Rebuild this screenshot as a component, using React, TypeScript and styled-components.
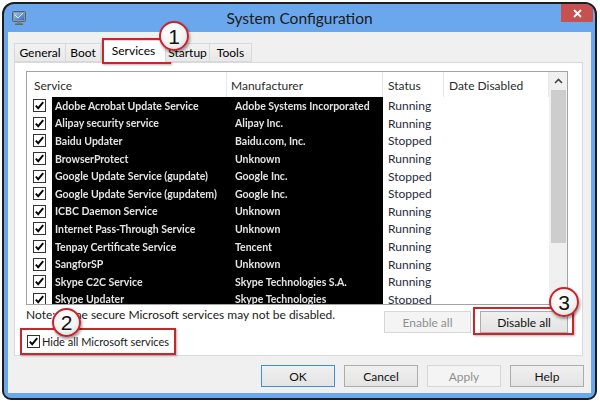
import React from "react";
import styled, { createGlobalStyle } from "styled-components";

const GlobalStyle = createGlobalStyle`
  html, body {
    margin: 0;
    padding: 0;
    background: #ffffff;
  }
  body {
    font-family: Lato, "Liberation Sans", sans-serif;
    font-size: 12px;
    color: #000;
  }
`;

const Page = styled.div`
  width: 600px;
  height: 406px;
  padding: 2px 0 0 2px;
  box-sizing: border-box;
`;

const Window = styled.div`
  width: 595px;
  height: 398px;
  box-sizing: border-box;
  border: 2px solid #1d1d1d;
  border-radius: 12px 12px 9px 9px;
  background: #6ba7ec;
  display: flex;
  flex-direction: column;
  overflow: hidden;
`;

const TitleBar = styled.div`
  height: 28px;
  flex: none;
  display: grid;
  grid-template-columns: 1fr auto 1fr;
  align-items: center;
`;

const AppIcon = styled.div`
  padding-left: 8px;
  display: flex;
  align-items: center;
`;

const Title = styled.div`
  font-size: 15.5px;
  color: #1a1a1a;
  margin-top: -1px;
`;

const CloseButton = styled.div`
  justify-self: end;
  align-self: start;
  width: 32px;
  height: 18px;
  margin-right: 2px;
  background: #c75050;
  display: flex;
  align-items: center;
  justify-content: center;
`;

const Client = styled.div`
  flex: 1;
  margin: 0 4px 5px;
  background: #f0f0f0;
  padding: 8px 8px 6px 6px;
  display: flex;
  flex-direction: column;
`;

const TabStrip = styled.div`
  display: flex;
  align-items: flex-end;
  height: 23px;
  margin-bottom: -1px;
`;

const Tab = styled.div<{ $w: number; $active?: boolean }>`
  position: relative;
  box-sizing: border-box;
  width: ${(p) => p.$w}px;
  height: ${(p) => (p.$active ? 23 : 19)}px;
  margin-bottom: ${(p) => (p.$active ? 0 : 1)}px;
  border: 1px solid #d9d9d9;
  border-bottom: ${(p) => (p.$active ? "none" : "1px solid #d9d9d9")};
  border-left-width: ${(p) => (p.$active ? 1 : 0)}px;
  background: ${(p) => (p.$active ? "#ffffff" : "linear-gradient(#f2f2f2, #e8e8e8)")};
  display: flex;
  align-items: center;
  justify-content: center;
  padding-bottom: ${(p) => (p.$active ? 3 : 0)}px;
  &:first-child {
    border-left-width: 1px;
  }
`;

const TabHighlight = styled.div`
  position: absolute;
  top: -3px;
  left: 0;
  right: -6px;
  bottom: -1px;
  border: 2px solid #c9252c;
  box-shadow: 1px 1px 2px rgba(0, 0, 0, 0.3);
`;

const Panel = styled.div`
  box-sizing: border-box;
  height: 294px;
  border: 1px solid #d9d9d9;
  background: #ffffff;
  padding: 8px 14px 0 11px;
`;

const ListView = styled.div`
  box-sizing: border-box;
  height: 234px;
  border: 1px solid #a3a3a3;
  background: #ffffff;
  display: flex;
  overflow: hidden;
`;

const Table = styled.div`
  flex: 1;
  display: flex;
  flex-direction: column;
  overflow: hidden;
`;

const HeaderRow = styled.div`
  display: grid;
  grid-template-columns: 200px 156px 61px 1fr;
  height: 25px;
  flex: none;
`;

const HeaderCell = styled.div<{ $pad: number }>`
  border-right: 1px solid #e3e8ee;
  padding-left: ${(p) => p.$pad}px;
  display: flex;
  align-items: center;
  color: #2b2b2b;
  padding-top: 1px;
`;

const Row = styled.div`
  display: grid;
  grid-template-columns: 25px 175px 156px 61px 1fr;
  height: 17.6px;
  flex: none;
  align-items: center;
`;

const CheckCell = styled.div`
  padding-left: 6px;
  display: flex;
  align-items: center;
`;

const Redacted = styled.div<{ $pad: number }>`
  background: #000;
  height: 100%;
  display: flex;
  align-items: center;
  padding-left: ${(p) => p.$pad}px;
  color: #e4e4e4;
  font-weight: 700;
  font-size: 10.5px;
  white-space: nowrap;
  overflow: hidden;
  filter: blur(0.35px);
`;

const StatusCell = styled.div`
  padding-left: 5px;
  color: #1f2a3c;
`;

const ScrollBar = styled.div`
  width: 18px;
  flex: none;
  background: #f0f0f0;
  display: flex;
  flex-direction: column;
  align-items: center;
`;

const ScrollArrow = styled.div`
  height: 18px;
  width: 100%;
  display: flex;
  align-items: center;
  justify-content: center;
`;

const ScrollThumb = styled.div`
  width: 15px;
  height: 153px;
  background: #cdcdcd;
`;

const BoxFrame = styled.div`
  box-sizing: border-box;
  width: 13px;
  height: 13px;
  border: 1px solid #333;
  background: #fff;
  display: flex;
  align-items: center;
  justify-content: center;
  flex: none;
`;

const BottomArea = styled.div`
  display: flex;
  justify-content: space-between;
`;

const LeftControls = styled.div`
  display: flex;
  flex-direction: column;
  align-items: flex-start;
`;

const Note = styled.div`
  margin-top: 3px;
  line-height: 14px;
  color: #1a1a1a;
`;

const HideBox = styled.div`
  position: relative;
  box-sizing: border-box;
  height: 27px;
  margin-top: 6px;
  margin-left: -6px;
  border: 2px solid #c9252c;
  box-shadow: 1px 1px 2px rgba(0, 0, 0, 0.3);
  padding: 0 5px;
  display: flex;
  align-items: center;
  gap: 2px;
`;

const Label = styled.span`
  color: #1a1a1a;
  font-size: 11px;
`;

const RightControls = styled.div`
  display: flex;
  gap: 9px;
  margin-top: 6px;
`;

const Button = styled.div<{ $w: number; $disabled?: boolean; $focused?: boolean }>`
  position: relative;
  box-sizing: border-box;
  width: ${(p) => p.$w}px;
  height: 22px;
  border: 1px solid ${(p) => (p.$focused ? "#3c8ee6" : p.$disabled ? "#d6d6d6" : "#acacac")};
  background: ${(p) => (p.$disabled ? "#f4f4f4" : "linear-gradient(#f0f0f0, #e3e3e3)")};
  color: ${(p) => (p.$disabled ? "#8f8f8f" : "#111")};
  display: flex;
  align-items: center;
  justify-content: center;
`;

const ButtonHighlight = styled.div`
  position: absolute;
  top: -5px;
  left: -8px;
  right: -7px;
  bottom: -3px;
  border: 2px solid #c9252c;
  box-shadow: 1px 1px 2px rgba(0, 0, 0, 0.3);
`;

const Footer = styled.div`
  display: flex;
  justify-content: flex-end;
  gap: 9px;
  margin-top: 9px;
  margin-right: -1px;
`;

const Callout = styled.div<{ $left: number; $top: number; $size: number }>`
  position: absolute;
  z-index: 10;
  left: ${(p) => p.$left}px;
  top: ${(p) => p.$top}px;
  width: ${(p) => p.$size}px;
  height: ${(p) => p.$size}px;
  box-sizing: border-box;
  border-radius: 50%;
  border: 2px solid #c4252d;
  background: radial-gradient(circle at 40% 30%, #ffffff 0%, #f4f4f4 55%, #d6d6d6 100%);
  box-shadow: 1px 2px 3px rgba(0, 0, 0, 0.4);
  display: flex;
  align-items: center;
  justify-content: center;
  font-family: "Liberation Sans", Arial, sans-serif;
  font-size: 21px;
  color: #111;
  line-height: 1;
`;

const CheckBox: React.FC = () => (
  <BoxFrame>
    <svg width="11" height="11" viewBox="0 0 11 11">
      <path d="M1.8 5.6 L4.2 8.2 L9.2 2.2" fill="none" stroke="#000" strokeWidth="1.9" />
    </svg>
  </BoxFrame>
);

const MonitorIcon: React.FC = () => (
  <svg width="14" height="16" viewBox="0 0 14 16">
    <defs>
      <linearGradient id="scr" x1="0" y1="0" x2="1" y2="1">
        <stop offset="0" stopColor="#9fc6f0" />
        <stop offset="1" stopColor="#2f6fc2" />
      </linearGradient>
    </defs>
    <rect x="0.5" y="1.5" width="13" height="10" rx="1" fill="#8a949e" stroke="#59626b" />
    <rect x="2" y="3" width="10" height="7" fill="url(#scr)" />
    <path d="M3 5 L6 8 L11 3" fill="none" stroke="#ffffff" strokeWidth="1" opacity="0.8" />
    <rect x="5" y="11.5" width="4" height="2" fill="#7d858c" />
    <rect x="3" y="13.5" width="8" height="1.5" fill="#5f676e" />
  </svg>
);

const services = [
  ["Adobe Acrobat Update Service", "Adobe Systems Incorporated", "Running"],
  ["Alipay security service", "Alipay Inc.", "Running"],
  ["Baidu Updater", "Baidu.com, Inc.", "Stopped"],
  ["BrowserProtect", "Unknown", "Running"],
  ["Google Update Service (gupdate)", "Google Inc.", "Stopped"],
  ["Google Update Service (gupdatem)", "Google Inc.", "Stopped"],
  ["ICBC Daemon Service", "Unknown", "Running"],
  ["Internet Pass-Through Service", "Unknown", "Running"],
  ["Tenpay Certificate Service", "Tencent", "Running"],
  ["SangforSP", "Unknown", "Running"],
  ["Skype C2C Service", "Skype Technologies S.A.", "Running"],
  ["Skype Updater", "Skype Technologies", "Stopped"],
];

const tabs = [
  { name: "General", w: 52 },
  { name: "Boot", w: 35 },
  { name: "Services", w: 65, active: true },
  { name: "Startup", w: 44 },
  { name: "Tools", w: 42 },
];

export default function App() {
  return (
    <Page>
      <GlobalStyle />
      <Window>
        <TitleBar>
          <AppIcon>
            <MonitorIcon />
          </AppIcon>
          <Title>System Configuration</Title>
          <CloseButton>
            <svg width="9" height="9" viewBox="0 0 9 9">
              <path d="M1 1 L8 8 M8 1 L1 8" stroke="#ffffff" strokeWidth="1.8" />
            </svg>
          </CloseButton>
        </TitleBar>
        <Client>
          <TabStrip>
            {tabs.map((t) => (
              <Tab key={t.name} $w={t.w} $active={t.active}>
                {t.name}
                {t.active && (
                  <>
                    <TabHighlight />
                    <Callout $left={57} $top={-20} $size={30}>1</Callout>
                  </>
                )}
              </Tab>
            ))}
          </TabStrip>
          <Panel>
            <ListView>
              <Table>
                <HeaderRow>
                  <HeaderCell $pad={7}>Service</HeaderCell>
                  <HeaderCell $pad={4}>Manufacturer</HeaderCell>
                  <HeaderCell $pad={5}>Status</HeaderCell>
                  <HeaderCell $pad={5}>Date Disabled</HeaderCell>
                </HeaderRow>
                {services.map(([name, maker, status]) => (
                  <Row key={name}>
                    <CheckCell>
                      <CheckBox />
                    </CheckCell>
                    <Redacted $pad={3}>{name}</Redacted>
                    <Redacted $pad={8}>{maker}</Redacted>
                    <StatusCell>{status}</StatusCell>
                    <div />
                  </Row>
                ))}
              </Table>
              <ScrollBar>
                <ScrollArrow>
                  <svg width="9" height="6" viewBox="0 0 9 6">
                    <path d="M1 5 L4.5 1.5 L8 5" fill="none" stroke="#444" strokeWidth="1.6" />
                  </svg>
                </ScrollArrow>
                <ScrollThumb />
              </ScrollBar>
            </ListView>
            <BottomArea>
              <LeftControls>
                <Note>Note: Some secure Microsoft services may not be disabled.</Note>
                <HideBox>
                  <CheckBox />
                  <Label>Hide all Microsoft services</Label>
                  <Callout $left={30} $top={-22} $size={29}>2</Callout>
                </HideBox>
              </LeftControls>
              <RightControls>
                <Button $w={87} $disabled>Enable all</Button>
                <Button $w={88}>
                  Disable all
                  <ButtonHighlight />
                  <Callout $left={68} $top={-25} $size={30}>3</Callout>
                </Button>
              </RightControls>
            </BottomArea>
          </Panel>
          <Footer>
            <Button $w={74} $focused>OK</Button>
            <Button $w={74}>Cancel</Button>
            <Button $w={74} $disabled>Apply</Button>
            <Button $w={74}>Help</Button>
          </Footer>
        </Client>
      </Window>
    </Page>
  );
}
